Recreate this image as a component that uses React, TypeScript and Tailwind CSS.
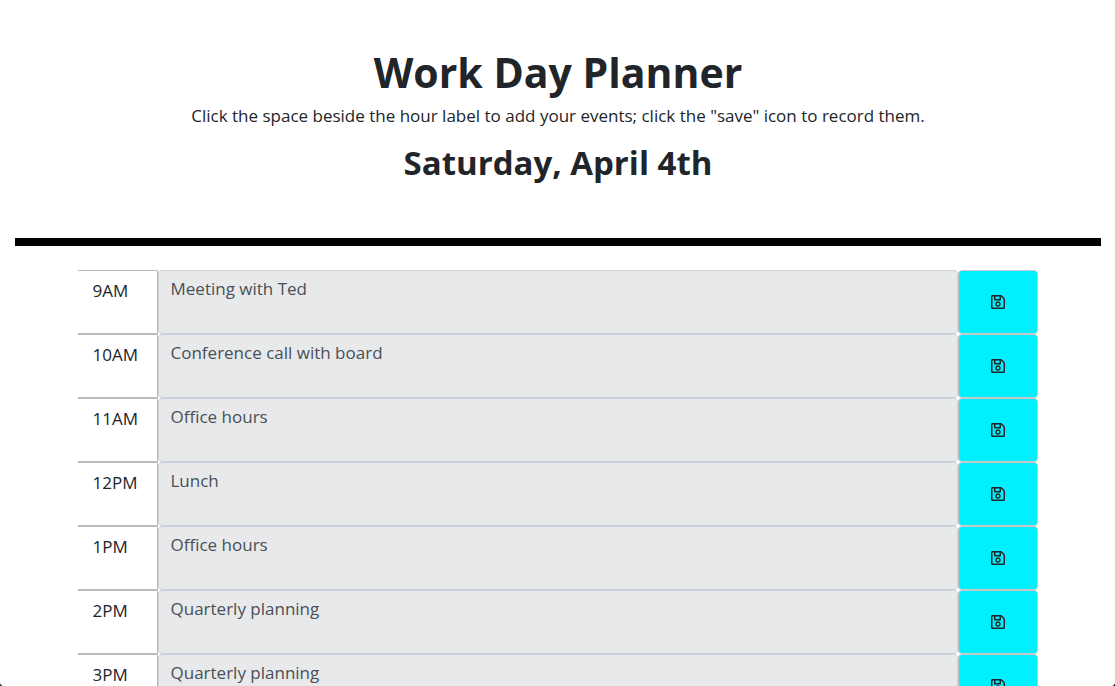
import { useState } from "react";
import { FaRegSave } from "react-icons/fa";

type Block = { hour: string; event: string };

const initialBlocks: Block[] = [
  { hour: "9AM", event: "Meeting with Ted" },
  { hour: "10AM", event: "Conference call with board" },
  { hour: "11AM", event: "Office hours" },
  { hour: "12PM", event: "Lunch" },
  { hour: "1PM", event: "Office hours" },
  { hour: "2PM", event: "Quarterly planning" },
  { hour: "3PM", event: "Quarterly planning" },
];

function TimeBlock({ hour, event }: Block) {
  const [text, setText] = useState(event);
  const id = `event-${hour}`;
  return (
    <li className="flex h-16">
      <label
        htmlFor={id}
        className="w-20 shrink-0 border-y border-r border-[#bbbbbb] px-[15px] pt-2 text-[17px] leading-6"
      >
        {hour}
      </label>
      <textarea
        id={id}
        value={text}
        onChange={(e) => setText(e.target.value)}
        className="block min-w-0 flex-1 resize-none rounded border border-[#c8d1da] bg-[#e8e9eb] px-3 py-1.5 text-[17px] leading-6 text-[#495057] outline-none"
      />
      <button
        type="button"
        aria-label={`Save ${hour}`}
        className="flex w-20 shrink-0 items-center justify-center rounded border border-[#c8c8c8] bg-[#00f0ff] text-base text-[#212529]"
      >
        <FaRegSave className="h-4 w-3.5" />
      </button>
    </li>
  );
}

export default function App() {
  return (
    <div className="h-screen overflow-x-hidden overflow-y-auto bg-white font-['Open_Sans','Noto_Sans',sans-serif] text-[#212529] [scrollbar-width:none]">
      <header className="mr-[14px] ml-[15px] border-b-8 border-black px-4 pt-12 pb-14 text-center">
        <h1 className="text-[41px] leading-[48px] font-bold">Work Day Planner</h1>
        <p className="mt-2 text-[17px] leading-6">
          Click the space beside the hour label to add your events; click the "save" icon to record them.
        </p>
        <h2 className="mt-4 text-[33px] leading-[38px] font-bold">Saturday, April 4th</h2>
      </header>
      <main className="mx-auto mt-6 max-w-[960px]">
        <ul>
          {initialBlocks.map((block) => (
            <TimeBlock key={block.hour} {...block} />
          ))}
        </ul>
      </main>
      <div className="pointer-events-none fixed bottom-0 left-0 size-[5px] bg-[radial-gradient(circle_at_top_right,transparent_5px,#0b2a3d_6px)]" />
      <div className="pointer-events-none fixed right-0 bottom-0 size-[5px] bg-[radial-gradient(circle_at_top_left,transparent_5px,#0b1a20_6px)]" />
    </div>
  );
}
